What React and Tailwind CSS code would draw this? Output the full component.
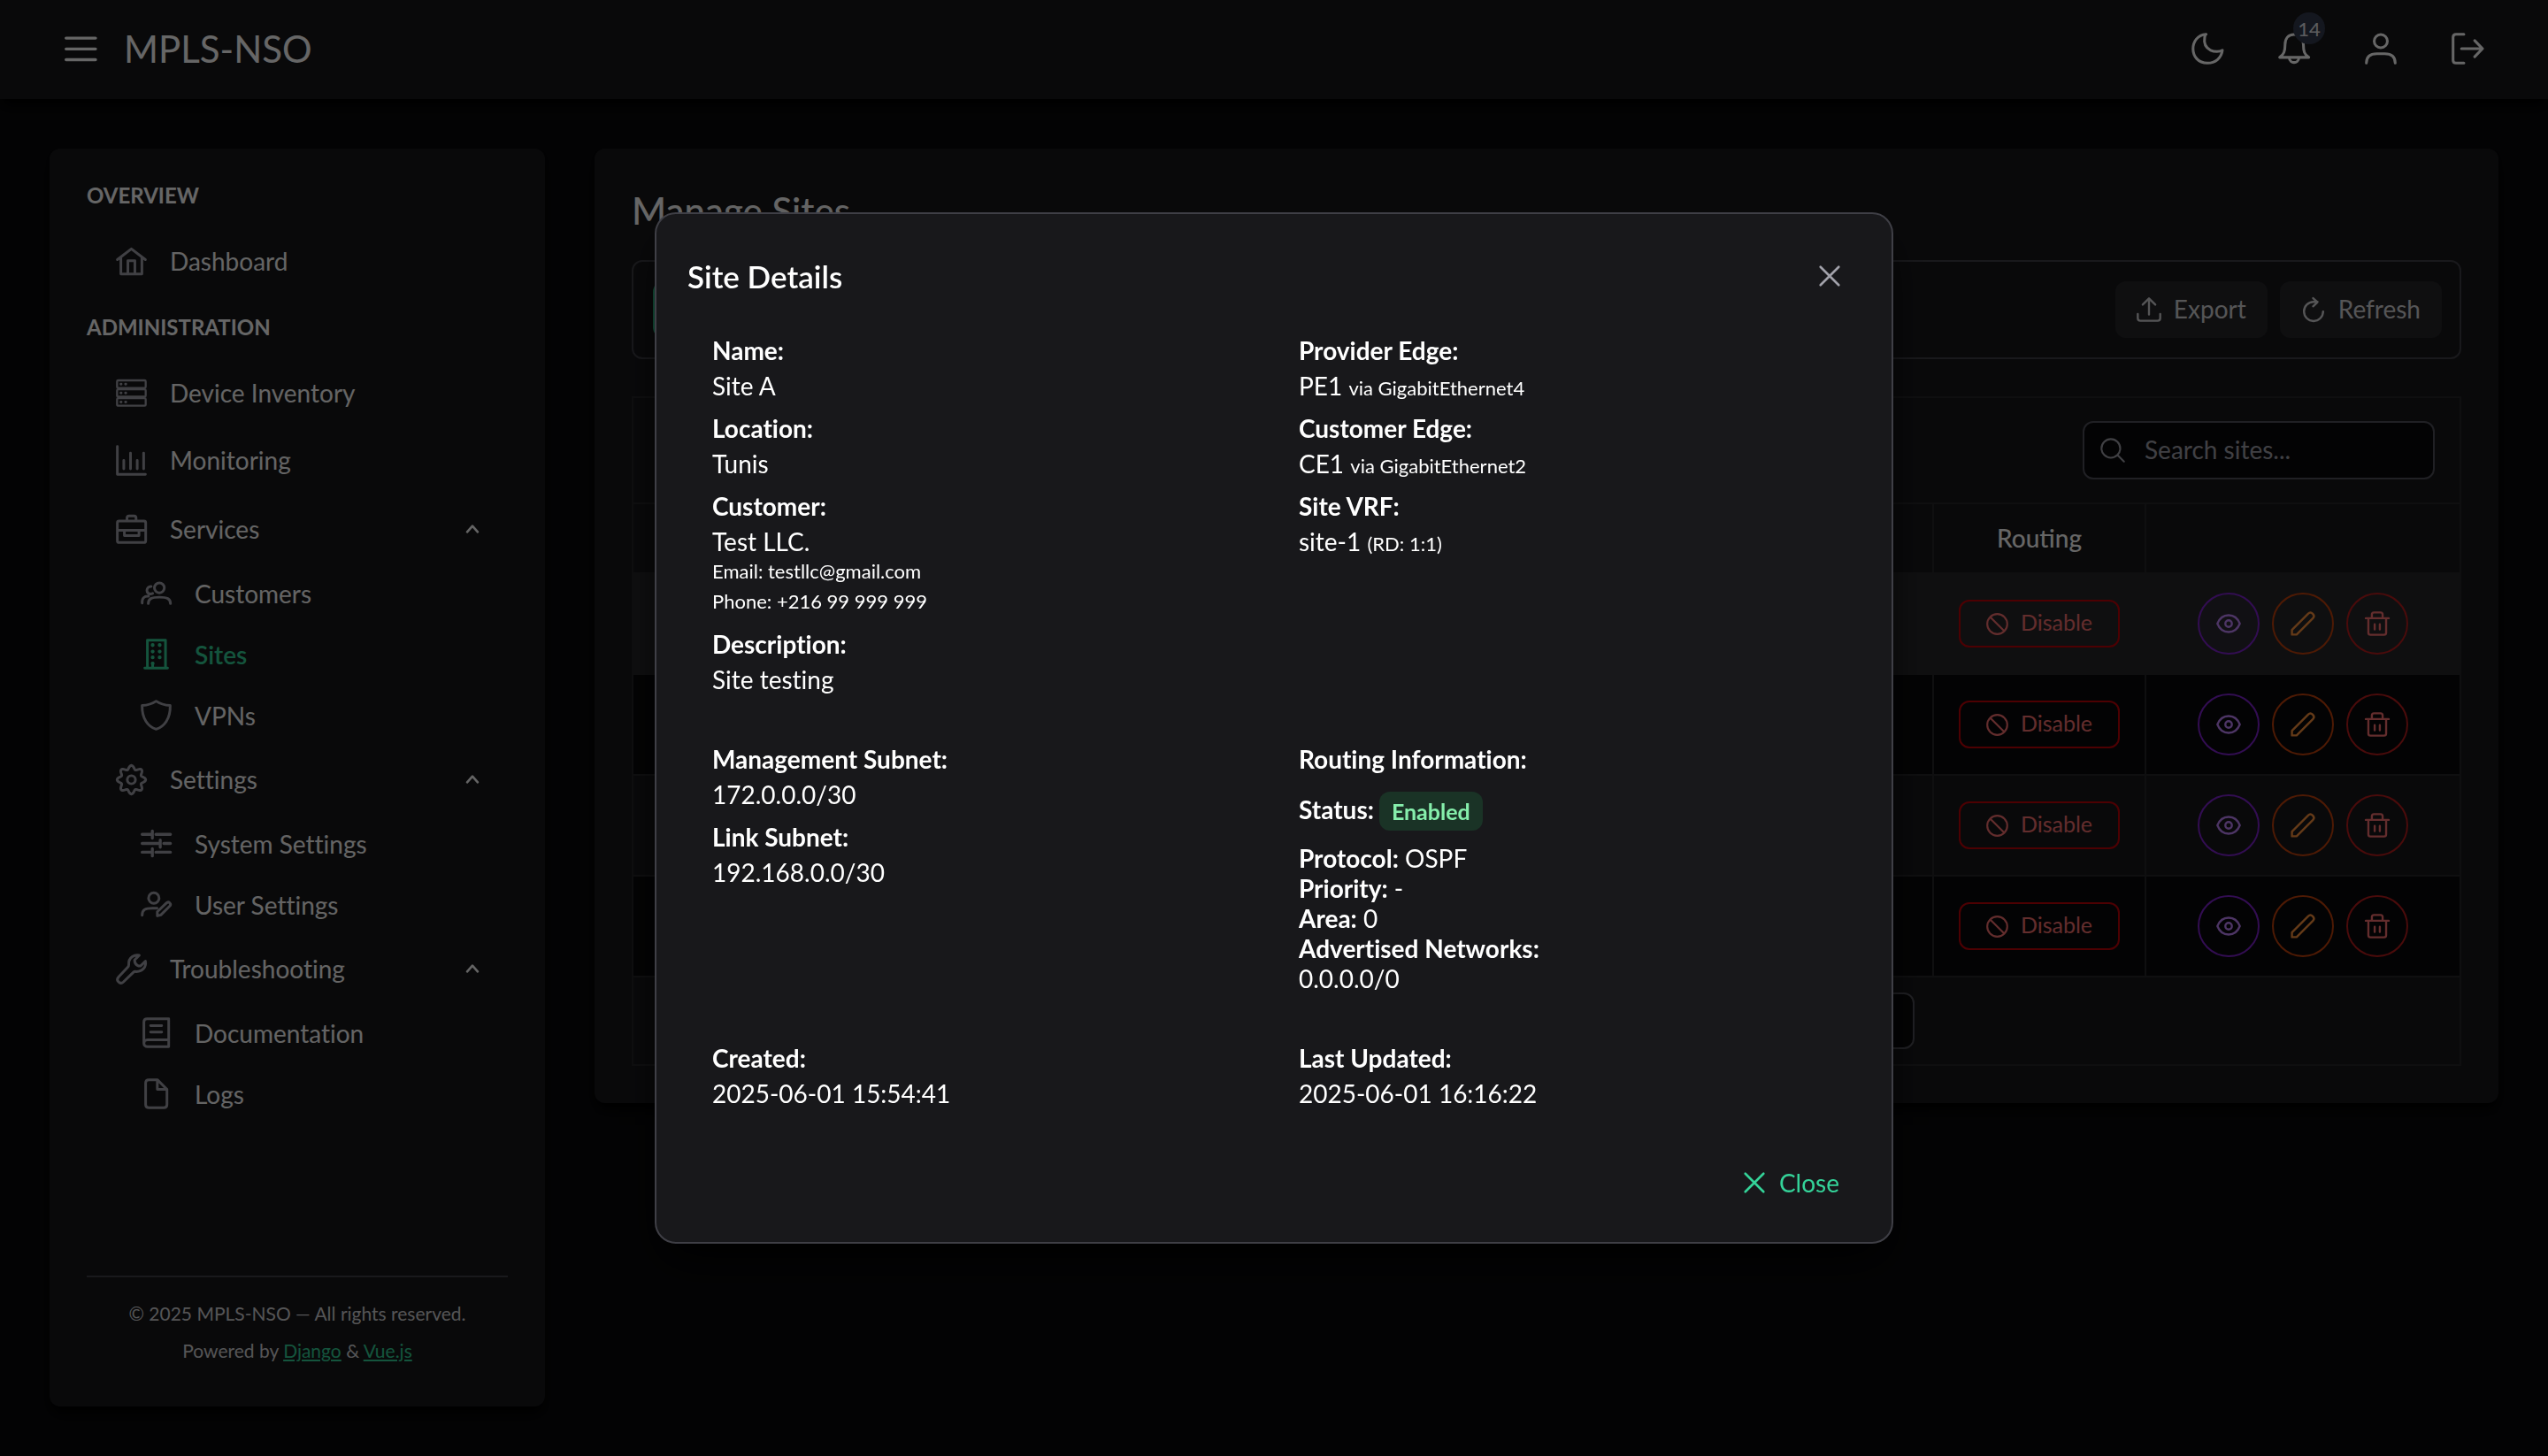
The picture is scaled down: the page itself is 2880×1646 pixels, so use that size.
import React from "react";

/* Line icons share a 106-unit square and a 9-unit stroke. */
const COG_PATH = (() => {
  const pts = [];
  for (let i = 0; i < 160; i++) {
    const a = (i / 160) * Math.PI * 2;
    const r = 42.5 + 6.5 * Math.cos(8 * a);
    pts.push((53 + r * Math.sin(a)).toFixed(1) + " " + (53 - r * Math.cos(a)).toFixed(1));
  }
  return "M" + pts.join("L") + "Z";
})();

const ICONS = {
  bars: <path d="M5 18H103M5 54H103M5 90H103" strokeWidth="10" />,
  moon: <path d="M49 5C-10 9-10 101 53 101C80 101 100 84 103 58C85 69 36 62 44 15Q46 5 49 5Z" />,
  bell: <path d="M53 6C33 6 23 20 23 40C23 62 19 72 5 82H102C87 72 84 62 84 40C84 20 73 6 53 6ZM37 84C39 104 67 104 69 84" />,
  user: (
    <>
      <circle cx="53" cy="28" r="22" />
      <path d="M5 101C5 78 18 70 40 70H66C88 70 101 78 101 101" />
    </>
  ),
  signOut: <path d="M41 5H15Q5 5 5 15V91Q5 101 15 101H41M33 53H102M77 26L103 53L77 80" />,
  home: <path d="M5 47L53 10L101 47M17 40V96H89V40M41 96V51H65V96" />,
  server: (
    <>
      <rect x="4" y="9" width="98" height="26" rx="4" strokeWidth="7" />
      <rect x="4" y="40" width="98" height="25" rx="4" strokeWidth="7" />
      <rect x="4" y="70" width="98" height="26" rx="4" strokeWidth="7" />
      <path d="M17 22h1M33 22h1M17 52h1M33 52h1M17 83h1M33 83h1" strokeWidth="9" />
    </>
  ),
  chart: <path d="M5 5V101H101M27 53V82M50 28V82M73 53V82M95 28V82" />,
  briefcase: <path d="M11 24H96Q102 24 102 30V92Q102 98 96 98H11Q5 98 5 92V30Q5 24 11 24ZM38 24V14Q38 7 45 7H62Q69 7 69 14V24M5 56H102M29 56V74H79V56" />,
  users: (
    <>
      <circle cx="64" cy="35" r="17" />
      <path d="M26 89C26 72 38 67 64 67C90 67 102 72 102 89M36 30C17 29 16 58 36 56L41 54M5 87C4 70 12 63 27 64" />
    </>
  ),
  building: (
    <>
      <path d="M23 101V5H85V101M14 101H92M41 101V84" />
      <path d="M41 22h.1M65 22h.1M41 44h.1M65 44h.1M41 64h.1M65 64h.1M41 85h.1" strokeWidth="13" />
    </>
  ),
  shield: <path d="M53 5C40 14 22 19 5 20C4 65 25 92 53 101C81 92 102 65 101 20C84 19 66 14 53 5Z" />,
  cog: (
    <>
      <path d={COG_PATH} />
      <circle cx="53" cy="53" r="14" />
    </>
  ),
  sliders: <path d="M5 22H36M52 22H102M40 10V35M5 53H64M79 53H102M67 41V66M5 83H36M52 83H102M40 71V96" strokeWidth="10" />,
  userEdit: (
    <>
      <circle cx="45" cy="31" r="18" />
      <path d="M5 90C5 70 16 66 40 66H56M57 92V78L88 48C96 40 107 51 99 59L69 89L57 92Z" />
    </>
  ),
  wrench: <path d="M80 6C66 2 42 12 44 38C44 42 43 44 41 46L9 80C-2 92 14 108 26 97L60 64C62 62 66 61 70 62C92 61 105 45 101 26L86 41C82 44 64 43 64 22Z" />,
  book: <path d="M96 5H22Q11 5 11 16V89M96 5V101H23A12 12 0 0 1 23 77H96M34 29H72M34 51H72" />,
  file: <path d="M57 5H28Q17 5 17 16V90Q17 101 28 101H79Q90 101 90 90V38ZM57 5V38H90" />,
  upload: <path d="M5 72V90Q5 101 16 101H90Q101 101 101 90V72M53 74V6M26 32L53 5L80 32" />,
  refresh: <path d="M94 61A41 41 0 1 1 53 20H70M51 4L70 21L51 39" />,
  search: <path d="M45 5A40 40 0 1 1 45 85A40 40 0 1 1 45 5ZM74 74L101 101" strokeWidth="8" />,
  ban: <path d="M53 5A48 48 0 1 1 53 101A48 48 0 1 1 53 5ZM19 19L87 87" />,
  eye: (
    <>
      <path d="M5 53C24 5 82 5 101 53C82 101 24 101 5 53Z" />
      <circle cx="53" cy="53" r="14" />
    </>
  ),
  pencil: <path d="M6 100V80L76 10C88-2 108 18 96 30L26 100Z" />,
  trash: <path d="M4 30H102M30 30V14Q30 5 39 5H67Q76 5 76 14V30M15 30V92Q15 101 24 101H82Q91 101 91 92V30M42 56V78M64 56V78" />,
  times: <path d="M14 14L92 92M92 14L14 92" strokeWidth="10" />,
  chevron: <path d="M8 78L53 28L98 78" strokeWidth="20" />,
};

function Icon({ name, className }) {
  return (
    <svg
      viewBox="0 0 106 106"
      fill="none"
      stroke="currentColor"
      strokeWidth="9"
      strokeLinecap="round"
      strokeLinejoin="round"
      overflow="visible"
      aria-hidden="true"
      className={"shrink-0 " + className}
    >
      {ICONS[name]}
    </svg>
  );
}

function HeaderButton({ icon, label, children }) {
  return (
    <button aria-label={label} className="relative flex size-[70px] items-center justify-center rounded-full">
      <Icon name={icon} className="size-9" />
      {children}
    </button>
  );
}

function Header() {
  return (
    <header className="flex h-28 items-center justify-between bg-[#18181b] px-14 pb-[2px] text-white shadow-lg shadow-black">
      <div className="flex items-center gap-[14px]">
        <HeaderButton icon="bars" label="Toggle menu" />
        <span className="text-[42px] leading-[50px]">MPLS-NSO</span>
      </div>
      <div className="flex items-center gap-7">
        <HeaderButton icon="moon" label="Dark mode" />
        <HeaderButton icon="bell" label="Notifications">
          <span className="absolute top-[-6px] right-0 flex size-9 items-center justify-center rounded-full bg-[#323a4e] text-[22px] text-gray-200">
            14
          </span>
        </HeaderButton>
        <HeaderButton icon="user" label="Profile" />
        <HeaderButton icon="signOut" label="Sign out" />
      </div>
    </header>
  );
}

function NavHeading({ children }) {
  return <h2 className="flex h-[73px] items-center text-[24px] font-bold text-white">{children}</h2>;
}

function NavItem({ icon, label }) {
  return (
    <a href="#" className="flex h-19 items-center gap-[26px] px-[33px]">
      <Icon name={icon} className="size-[35px] text-[#a1a1aa]" />
      {label}
    </a>
  );
}

function NavSubItem({ icon, label, active }) {
  return (
    <a
      href="#"
      className={
        active
          ? "flex h-[69px] items-center gap-[26px] pl-[61px] font-semibold text-[#34d399]"
          : "flex h-[69px] items-center gap-[26px] pl-[61px]"
      }
    >
      <Icon name={icon} className={active ? "size-[35px]" : "size-[35px] text-[#a1a1aa]"} />
      {label}
    </a>
  );
}

function NavGroup({ icon, label, children }) {
  return (
    <div>
      <button className="flex h-19 w-full items-center gap-[26px] px-[33px] text-left">
        <Icon name={icon} className="size-[35px] text-[#a1a1aa]" />
        <span className="flex-1">{label}</span>
        <Icon name="chevron" className="size-[14px]" />
      </button>
      {children}
    </div>
  );
}

function Sidebar() {
  return (
    <aside className="flex w-[560px] shrink-0 flex-col rounded-xl bg-[#18181b] px-[42px] pt-4 pb-10 text-[28px] leading-[34px] text-[#fafafa] shadow-lg shadow-black">
      <nav>
        <NavHeading>OVERVIEW</NavHeading>
        <NavItem icon="home" label="Dashboard" />
        <NavHeading>ADMINISTRATION</NavHeading>
        <NavItem icon="server" label="Device Inventory" />
        <NavItem icon="chart" label="Monitoring" />
        <div className="mt-[2px]">
          <NavGroup icon="briefcase" label="Services">
            <NavSubItem icon="users" label="Customers" />
            <NavSubItem icon="building" label="Sites" active />
            <NavSubItem icon="shield" label="VPNs" />
          </NavGroup>
          <NavGroup icon="cog" label="Settings">
            <NavSubItem icon="sliders" label="System Settings" />
            <NavSubItem icon="userEdit" label="User Settings" />
          </NavGroup>
          <NavGroup icon="wrench" label="Troubleshooting">
            <NavSubItem icon="book" label="Documentation" />
            <NavSubItem icon="file" label="Logs" />
          </NavGroup>
        </div>
      </nav>
      <footer className="mt-auto border-t-2 border-[#3f3f46] pt-5 pb-[2px] text-center text-[21px] leading-[42px] text-[#d4d4d8]">
        <p>© 2025 MPLS-NSO — All rights reserved.</p>
        <p>
          Powered by{" "}
          <a href="#" className="text-[#34d399] underline">Django</a> &{" "}
          <a href="#" className="text-[#34d399] underline">Vue.js</a>
        </p>
      </footer>
    </aside>
  );
}

function ToolButton({ icon, label }) {
  return (
    <button className="flex h-16 items-center gap-[14px] rounded-xl bg-[#27272a] px-6 text-[28px] text-[#d4d4d8]">
      <Icon name={icon} className="size-7" />
      <span className="pb-[2px]">{label}</span>
    </button>
  );
}

function SiteRow({ tone, viewTone }) {
  return (
    <tr className={tone}>
      <td className="border-b-2 border-[#27272a]" />
      <td className="border-b-2 border-l-2 border-[#27272a]">
        <button className="mx-auto flex h-[54px] w-[182px] items-center justify-center gap-[14px] rounded-xl border-2 border-red-700 text-[25px] text-[#f87171]">
          <Icon name="ban" className="size-[25px]" />
          <span className="pb-1">Disable</span>
        </button>
      </td>
      <td className="border-b-2 border-l-2 border-[#27272a]">
        <div className="flex justify-center gap-[14px]">
          <button
            aria-label="View"
            className={"flex size-[70px] items-center justify-center rounded-full border-2 border-[#7e22ce] text-[#c084fc] " + viewTone}
          >
            <Icon name="eye" className="size-7" />
          </button>
          <button aria-label="Edit" className="flex size-[70px] items-center justify-center rounded-full border-2 border-[#c2410c] text-[#fb923c]">
            <Icon name="pencil" className="size-7" />
          </button>
          <button aria-label="Delete" className="flex size-[70px] items-center justify-center rounded-full border-2 border-[#b91c1c] text-[#f87171]">
            <Icon name="trash" className="size-7" />
          </button>
        </div>
      </td>
    </tr>
  );
}

function SitesPanel() {
  return (
    <main className="min-w-0 flex-1 self-start rounded-xl bg-[#18181b] p-[42px] text-[28px] leading-[34px] shadow-lg shadow-black">
      <h1 className="mb-7 text-[42px] leading-[56px] font-medium text-white">Manage Sites</h1>
      <div className="flex items-center justify-between rounded-xl border-2 border-[#3f3f46] py-[22px] pr-5 pl-[22px]">
        <button aria-label="New site" className="h-16 w-32 rounded-xl bg-[#34d399]" />
        <div className="flex gap-[14px]">
          <ToolButton icon="upload" label="Export" />
          <ToolButton icon="refresh" label="Refresh" />
        </div>
      </div>
      <div className="mt-[42px] border-2 border-[#27272a]">
        <div className="flex justify-end border-b-2 border-[#27272a] px-7 py-[26px]">
          <label className="flex h-[66px] w-[398px] items-center gap-[22px] rounded-xl border-2 border-[#52525b] bg-[#09090b] px-[18px] text-[#a1a1aa]">
            <Icon name="search" className="size-7" />
            <input
              type="text"
              aria-label="Search sites"
              placeholder="Search sites..."
              className="w-full min-w-0 bg-transparent pb-[2px] outline-none placeholder:text-[#a1a1aa]"
            />
          </label>
        </div>
        <table className="w-full table-fixed border-separate border-spacing-0">
          <colgroup>
            <col />
            <col className="w-[240px]" />
            <col className="w-[356px]" />
          </colgroup>
          <thead>
            <tr className="h-[79px]">
              <th className="border-b-2 border-[#27272a]" />
              <th className="border-b-2 border-l-2 border-[#27272a] pb-[2px] font-medium text-white [font-variant-ligatures:normal]">
                Routing
              </th>
              <th className="border-b-2 border-l-2 border-[#27272a]" />
            </tr>
          </thead>
          <tbody>
            <SiteRow tone="h-[114px] bg-[#27272a]" viewTone="bg-[#2c2a32]" />
            <SiteRow tone="h-[114px] bg-[#09090b]" viewTone="" />
            <SiteRow tone="h-[114px]" viewTone="" />
            <SiteRow tone="h-[114px] bg-[#09090b]" viewTone="" />
          </tbody>
        </table>
        <div className="flex justify-center py-[17px]">
          <div className="flex w-[832px] justify-end">
            <select
              aria-label="Rows per page"
              className="h-16 w-32 appearance-none rounded-xl border-2 border-[#52525b] bg-[#09090b]"
            />
          </div>
        </div>
      </div>
    </main>
  );
}

function Field({ label, children }) {
  return (
    <div>
      <dt className="font-bold">{label}</dt>
      <dd className="mt-[6px]">{children}</dd>
    </div>
  );
}

function Small({ children }) {
  return <span className="text-[22px] leading-none">{children}</span>;
}

function SiteDialog() {
  return (
    <div className="fixed inset-0 flex items-center justify-center bg-black/60">
      <section
        role="dialog"
        aria-labelledby="dialog-title"
        className="w-[1400px] max-w-[90vw] rounded-3xl border-2 border-[#3f3f46] bg-[#18181b] p-[35px] text-[28px] leading-[34px] text-white shadow-2xl shadow-black"
      >
        <header className="flex items-center justify-between">
          <h2 id="dialog-title" className="text-[35px] leading-[42px] font-semibold">Site Details</h2>
          <button aria-label="Close dialog" className="flex size-[70px] items-center justify-center rounded-full text-[#a1a1aa]">
            <Icon name="times" className="size-7" />
          </button>
        </header>
        <div className="mt-1 grid grid-cols-2">
          <dl className="flex flex-col gap-[14px] p-7">
            <Field label="Name:">Site A</Field>
            <Field label="Location:">Tunis</Field>
            <Field label="Customer:">
              Test LLC.
              <span className="block text-[22px] leading-[34px]">Email: testllc@gmail.com</span>
              <span className="block text-[22px] leading-[34px]">Phone: +216 99 999 999</span>
            </Field>
            <Field label="Description:">Site testing</Field>
          </dl>
          <dl className="flex flex-col gap-[14px] p-7">
            <Field label="Provider Edge:">PE1 <Small>via GigabitEthernet4</Small></Field>
            <Field label="Customer Edge:">CE1 <Small>via GigabitEthernet2</Small></Field>
            <Field label="Site VRF:">site-1 <Small>(RD: 1:1)</Small></Field>
          </dl>
          <dl className="flex flex-col gap-[14px] p-7">
            <Field label="Management Subnet:">172.0.0.0/30</Field>
            <Field label="Link Subnet:">192.168.0.0/30</Field>
          </dl>
          <div className="p-7">
            <h3 className="font-bold">Routing Information:</h3>
            <div className="mt-[20px] mb-[14px] flex h-[44px] items-center gap-[6px]">
              <strong className="pb-1">Status:</strong>
              <span className="flex h-[44px] items-center rounded-xl bg-[#1a3326] px-[14px] text-[25px] font-bold text-[#86efac]">
                Enabled
              </span>
            </div>
            <p><strong>Protocol:</strong> OSPF</p>
            <p><strong>Priority:</strong> -</p>
            <p><strong>Area:</strong> 0</p>
            <p><strong>Advertised Networks:</strong></p>
            <p>0.0.0.0/0</p>
          </div>
          <dl className="p-7">
            <Field label="Created:">2025-06-01 15:54:41</Field>
          </dl>
          <dl className="p-7">
            <Field label="Last Updated:">2025-06-01 16:16:22</Field>
          </dl>
        </div>
        <footer className="mt-6 flex justify-end">
          <button className="flex h-16 items-center gap-[14px] px-6 text-[#34d399]">
            <Icon name="times" className="size-7" />
            Close
          </button>
        </footer>
      </section>
    </div>
  );
}

export default function App() {
  return (
    <div className="flex min-h-screen flex-col bg-[#09090b] font-[Lato,sans-serif] [font-variant-ligatures:none]">
      <Header />
      <div className="flex flex-1 gap-14 p-14">
        <Sidebar />
        <SitesPanel />
      </div>
      <SiteDialog />
    </div>
  );
}
